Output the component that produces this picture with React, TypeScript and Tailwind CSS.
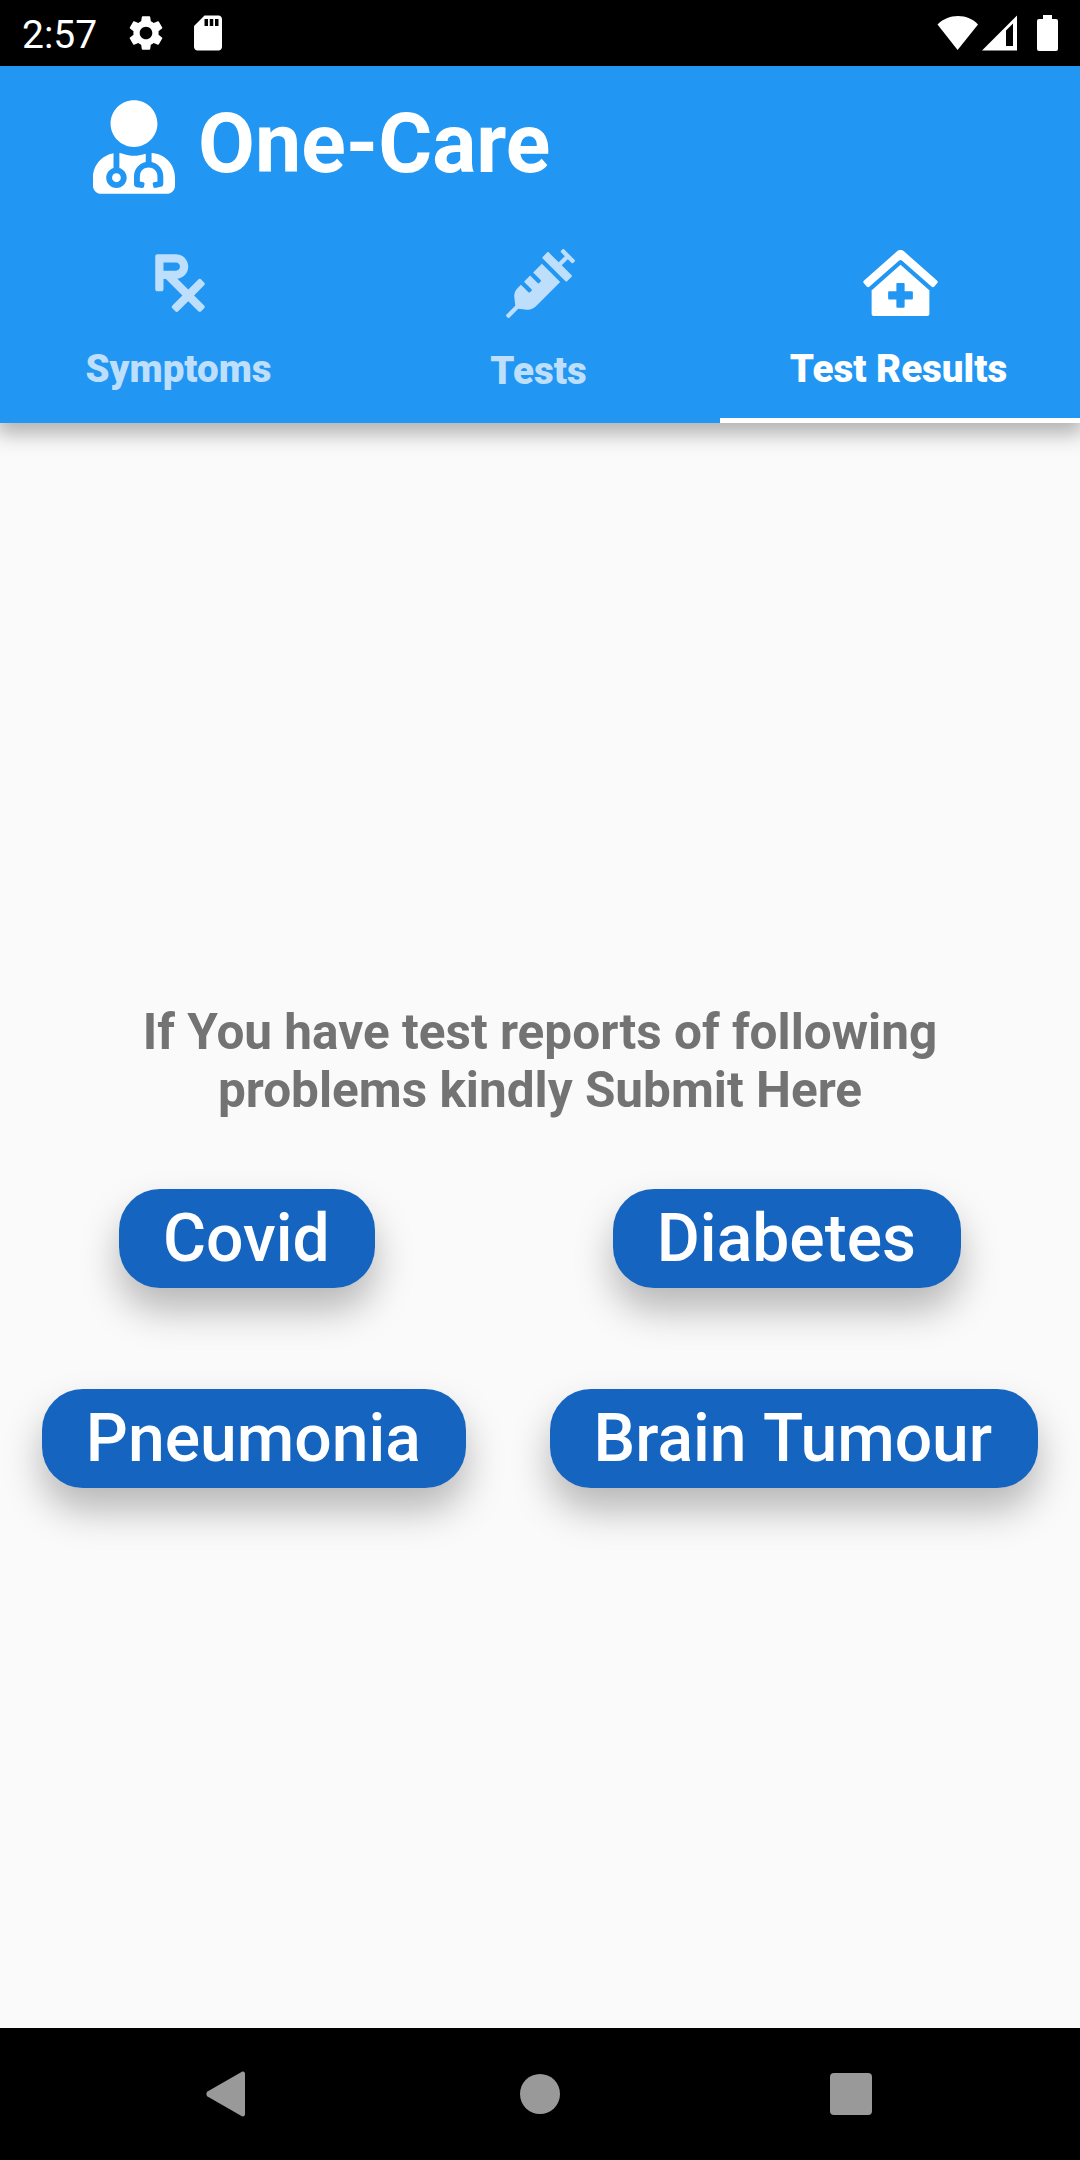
import React from "react";
import { FaClinicMedical, FaPrescription, FaSyringe, FaUserMd } from "react-icons/fa";
import { MdSdStorage, MdSettings } from "react-icons/md";

function StatusBar() {
  return (
    <div className="flex h-[66px] shrink-0 items-center bg-black text-white">
      <span className="ml-[22px] mt-[4px] w-[77px] text-[39px] leading-none">2:57</span>
      <MdSettings className="ml-[26px] size-[42px]" />
      <MdSdStorage className="ml-[20px] size-[42px]" />
      <svg className="ml-auto h-[36px] w-[42px]" viewBox="0 0 42 36" fill="currentColor">
        <path d="M0.5 9.5C6 4 13 1 21 1s15 3 20 8.5L20.6 35z" />
      </svg>
      <svg className="ml-[3px] h-[36px] w-[35px]" viewBox="0 0 35 36" fill="currentColor" fillRule="evenodd">
        <path d="M35 0.5V35.5H0zM24 15.500V31H31V8.500z" />
      </svg>
      <svg className="ml-[20px] mr-[22px] h-[36px] w-[21px]" viewBox="0 0 21 36" fill="currentColor">
        <path d="M6 0h9v4h4a2 2 0 0 1 2 2v28a2 2 0 0 1-2 2H2a2 2 0 0 1-2-2V6a2 2 0 0 1 2-2h4z" />
      </svg>
    </div>
  );
}

function Tab({ icon, label, active = false }: { icon: React.ReactNode; label: string; active?: boolean }) {
  return (
    <div
      className={
        active
          ? "relative flex flex-1 flex-col items-center justify-center text-white"
          : "relative flex flex-1 flex-col items-center justify-center text-[#bddffc]"
      }
    >
      {icon}
      <span className="mt-[30px] mr-[3px] text-[38.500px] font-black leading-[45px]">{label}</span>
      {active && <div className="absolute inset-x-0 -bottom-[2px] h-[5px] bg-white" />}
    </div>
  );
}

function AppBar() {
  return (
    <header className="relative z-10 flex h-[357px] shrink-0 flex-col bg-[#2196f3] shadow-[0_8px_19px_3px_rgba(0,0,0,0.29)]">
      <div className="flex h-[154px] items-center pl-[93px] text-white">
        <FaUserMd className="mt-[8px] h-[94px] w-[82px]" />
        <h1 className="ml-[23px] mt-[2px] text-[82.500px] font-bold leading-none">One-Care</h1>
      </div>
      <nav className="flex flex-1 pb-[2px]">
        <Tab icon={<FaPrescription className="h-[66px] w-[50px]" />} label="Symptoms" />
        <Tab icon={<FaSyringe className="size-[69px]" />} label="Tests" />
        <Tab icon={<FaClinicMedical className="h-[66px] w-[75px]" />} label="Test Results" active />
      </nav>
    </header>
  );
}

function ReportButton({ children, wide = false }: { children: React.ReactNode; wide?: boolean }) {
  return (
    <button
      className={
        "h-[99px] rounded-[41px] bg-[#1565c0] pl-[44px] pt-px text-[66px] font-medium leading-none text-white shadow-[0_22px_38px_rgba(0,0,0,0.27)] " +
        (wide ? "pr-[46px] [word-spacing:1.500px]" : "pr-[45px]")
      }
    >
      {children}
    </button>
  );
}

export default function App() {
  return (
    <div className="flex h-[2160px] w-[1080px] flex-col overflow-hidden bg-[#fafafa] font-['Roboto',sans-serif]">
      <StatusBar />
      <AppBar />
      <main className="flex flex-1 flex-col pt-[580px]">
        <p className="text-center text-[49.500px] font-bold leading-[58px] text-[#737373]">
          If You have test reports of following
          <br />
          problems kindly Submit Here
        </p>
        <div className="mt-[69.600px] flex justify-around">
          <ReportButton>Covid</ReportButton>
          <ReportButton>Diabetes</ReportButton>
        </div>
        <div className="mt-[101.700px] flex justify-around">
          <ReportButton>Pneumonia</ReportButton>
          <ReportButton wide>Brain Tumour</ReportButton>
        </div>
      </main>
      <div className="flex h-[132px] shrink-0 items-center bg-black text-[#999999]">
        <svg className="ml-[206px] h-[46px] w-[40px]" viewBox="0 0 40 46" fill="currentColor">
          <path d="M1.500 20.500 35.500 1C37.500 0 39 1 39 3v40c0 2-1.500 3-3.500 2L1.500 25.500C0 24.500 0 21.500 1.500 20.500z" />
        </svg>
        <div className="ml-[274px] size-[40px] rounded-full bg-[#999999]" />
        <div className="ml-[270px] size-[42px] rounded-[4px] bg-[#999999]" />
      </div>
    </div>
  );
}
